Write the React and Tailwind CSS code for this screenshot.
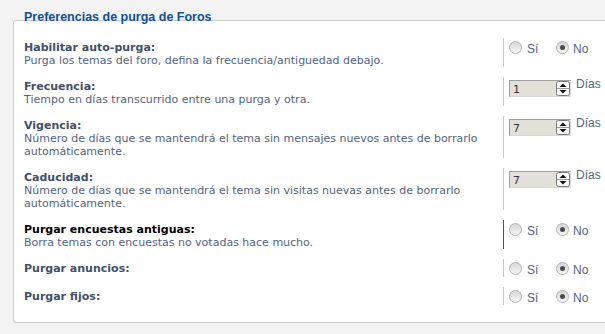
import React from 'react';

const rows = [
  { id: 'auto', label: 'Habilitar auto-purga:', desc: ['Purga los temas del foro, defina la frecuencia/antiguedad debajo.'], type: 'radio' },
  { id: 'freq', label: 'Frecuencia:', desc: ['Tiempo en días transcurrido entre una purga y otra.'], type: 'number', value: '1' },
  { id: 'vig', label: 'Vigencia:', desc: ['Número de días que se mantendrá el tema sin mensajes nuevos antes de borrarlo', 'automáticamente.'], type: 'number', value: '7' },
  { id: 'cad', label: 'Caducidad:', desc: ['Número de días que se mantendrá el tema sin visitas nuevas antes de borrarlo', 'automáticamente.'], type: 'number', value: '7' },
  { id: 'enc', label: 'Purgar encuestas antiguas:', desc: ['Borra temas con encuestas no votadas hace mucho.'], type: 'radio', hover: true },
  { id: 'anu', label: 'Purgar anuncios:', desc: [], type: 'radio' },
  { id: 'fij', label: 'Purgar fijos:', desc: [], type: 'radio' },
];

function Radio({ checked }) {
  return (
    <span className="w-[13px] h-[13px] shrink-0 rounded-full border border-[#b3b3b3] bg-linear-to-b from-[#d6d6d6] to-[#f6f6f6] flex items-center justify-center">
      {checked && <span className="w-[5px] h-[5px] rounded-full bg-[#4a4a4a]" />}
    </span>
  );
}

function RadioPair() {
  return (
    <div className="flex items-center mt-[3px] h-[13px] font-['Liberation_Sans',sans-serif] text-[12px] leading-[14px] text-[#536482]">
      <label className="flex items-center w-[47px]">
        <Radio />
        <span className="ml-[5px] pt-[3px]">Sí</span>
      </label>
      <label className="flex items-center">
        <Radio checked />
        <span className="ml-[4px] pt-[3px]">No</span>
      </label>
    </div>
  );
}

function Spinner() {
  return (
    <svg width="14" height="15" viewBox="0 0 14 15" className="shrink-0">
      <rect x="0.5" y="0.5" width="13" height="14" rx="2" fill="#fff" stroke="#7a7a7a" />
      <line x1="1" y1="7.5" x2="13" y2="7.5" stroke="#9a9a9a" />
      <path d="M7 2.5 L10.5 6 L3.5 6 Z" fill="#111" />
      <path d="M3.5 9 L10.5 9 L7 12.5 Z" fill="#111" />
    </svg>
  );
}

function NumberField({ value }) {
  return (
    <div className="flex items-start">
      <div className="mt-[3px] w-[62px] h-[17px] flex items-center bg-[#e3e0d9] border border-t-[#9f9f9f] border-l-[#9f9f9f] border-r-[#d8d8d8] border-b-[#d8d8d8]">
        <span className="pl-[3px] pt-[1px] font-['DejaVu_Sans',sans-serif] text-[11px] text-[#333] leading-[13px]">{value}</span>
        <span className="ml-auto mr-0">
          <Spinner />
        </span>
      </div>
      <span className="ml-[5px] font-['Liberation_Sans',sans-serif] text-[12px] leading-[14px] text-[#536482]">Días</span>
    </div>
  );
}

export default function App() {
  return (
    <div className="w-[605px] h-[334px] bg-[#f3f3f3] overflow-hidden pt-[20px] pl-[13px]">
      <div className="relative w-[600px] h-[303px] border border-[#cccccc] rounded-[3px] bg-white pt-[17px] pl-[10px]">
        <h2 className="absolute left-[10px] -top-[11px] font-['Liberation_Sans',sans-serif] font-bold text-[12.5px] leading-[15px] text-[#115098]">
          Preferencias de purga de Foros
        </h2>

        <div className="flex flex-col gap-[10px]">
          {rows.map(r => (
            <div key={r.id} className="flex">
              <div className="w-[479px] pt-[3px] font-['DejaVu_Sans',sans-serif] text-[11px] leading-[13px]">
                <div className={`font-bold ${r.hover ? 'text-black' : 'text-[#425067]'}`}>{r.label}</div>
                {r.desc.map((line, i) => (
                  <div key={i} className="text-[#536482]">{line}</div>
                ))}
              </div>
              <div className={`border-l pl-[5px] min-h-[18px] ${r.hover ? 'border-[#555555]' : 'border-[#cccccc]'}`}>
                {r.type === 'radio' ? <RadioPair /> : <NumberField value={r.value} />}
              </div>
            </div>
          ))}
        </div>
      </div>
    </div>
  );
}
